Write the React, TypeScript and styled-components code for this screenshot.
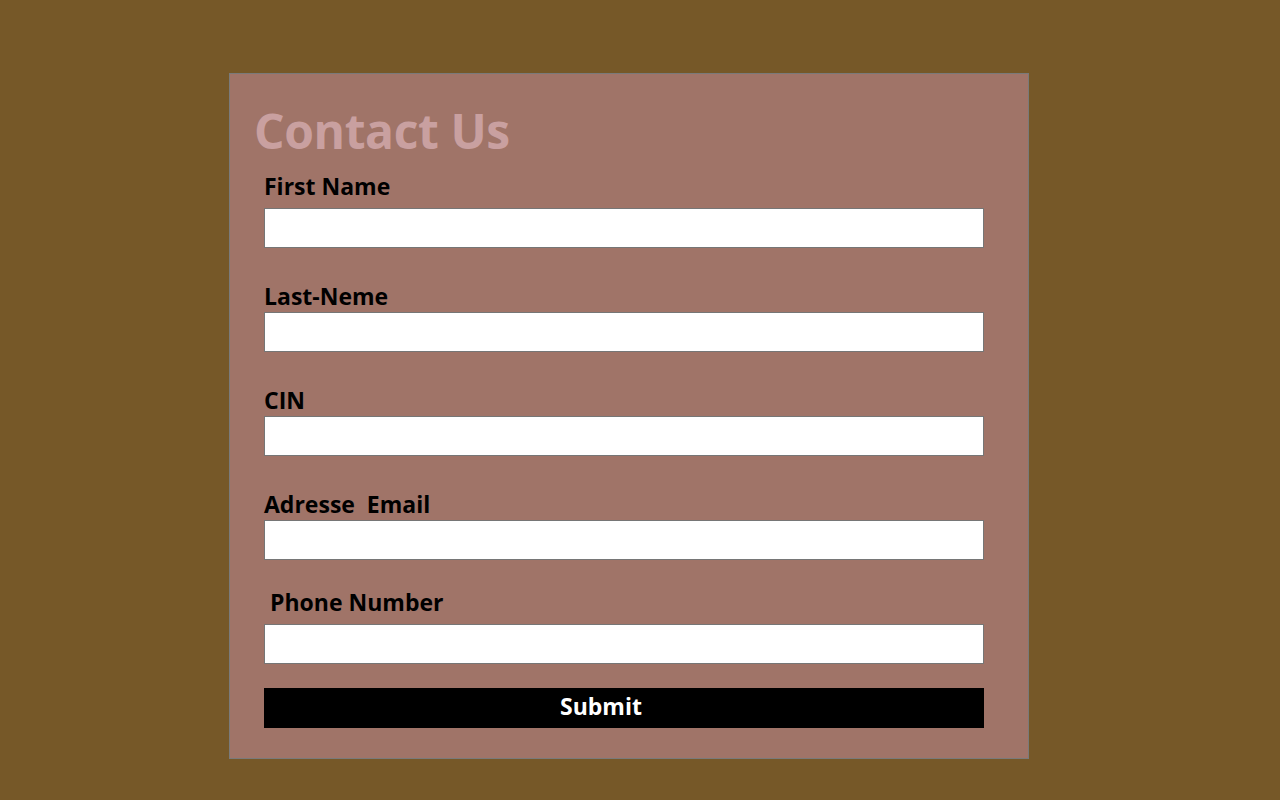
import React from 'react';
import styled, { createGlobalStyle } from 'styled-components';

const GlobalStyle = createGlobalStyle`
    html, body {
        margin: 0;
        padding: 0;
        background: #765828;
    }
    body {
        font-family: 'Open Sans', 'Noto Sans', sans-serif;
    }
`;

type Field = { label: string; gapBelow?: boolean; indent?: boolean; tight?: boolean };

const fields: Field[] = [
    { label: 'First Name', gapBelow: true },
    { label: 'Last-Neme' },
    { label: 'CIN' },
    { label: 'Adresse\u00a0 Email' },
    { label: 'Phone Number', gapBelow: true, indent: true, tight: true },
];

const App: React.FC = () => {
    return (
        <Page>
            <GlobalStyle />
            <Card>
                <Title>Contact Us</Title>
                <Form onSubmit={(e) => e.preventDefault()}>
                    {fields.map((f, i) => (
                        <Group key={f.label} $first={i === 0} $tight={f.tight}>
                            <Label $gapBelow={f.gapBelow} $indent={f.indent}>
                                {f.label}
                            </Label>
                            <Input type="text" />
                        </Group>
                    ))}
                    <Submit type="submit">Submit</Submit>
                </Form>
            </Card>
        </Page>
    );
};

const Page = styled.div`
    width: 1280px;
    height: 800px;
    padding-top: 73px;
    padding-left: 229px;
    box-sizing: border-box;
`;

const Card = styled.div`
    width: 800px;
    height: 686px;
    box-sizing: border-box;
    background: #a07468;
    border: 1px solid #7a7a7a;
    display: flex;
    flex-direction: column;
`;

const Title = styled.h1`
    margin: 24px 0 0 24px;
    font-size: 48px;
    line-height: 66px;
    font-weight: 700;
    color: #c9a0a0;
    letter-spacing: -0.4px;
`;

const Form = styled.form`
    display: flex;
    flex-direction: column;
    padding: 0 44px 0 34px;
`;

const Group = styled.div<{ $first?: boolean; $tight?: boolean }>`
    display: flex;
    flex-direction: column;
    margin-top: ${(p) => (p.$first ? '6px' : p.$tight ? '26px' : '32px')};
`;

const Label = styled.label<{ $gapBelow?: boolean; $indent?: boolean }>`
    font-size: 23px;
    line-height: 32px;
    font-weight: 700;
    color: #000;
    padding-left: ${(p) => (p.$indent ? '6px' : '0')};
    margin-bottom: ${(p) => (p.$gapBelow ? '6px' : '0')};
    white-space: pre;
`;

const Input = styled.input`
    width: 720px;
    height: 40px;
    box-sizing: border-box;
    border: 1px solid #767676;
    background: #fff;
    margin: 0;
    padding: 0 6px;
    font-size: 18px;
`;

const Submit = styled.button`
    margin-top: 24px;
    width: 720px;
    height: 40px;
    border: none;
    background: #000;
    color: #fff;
    font-family: inherit;
    font-size: 23px;
    font-weight: 700;
    padding: 0 46px 4px 0;
    cursor: pointer;
`;

export default App;
